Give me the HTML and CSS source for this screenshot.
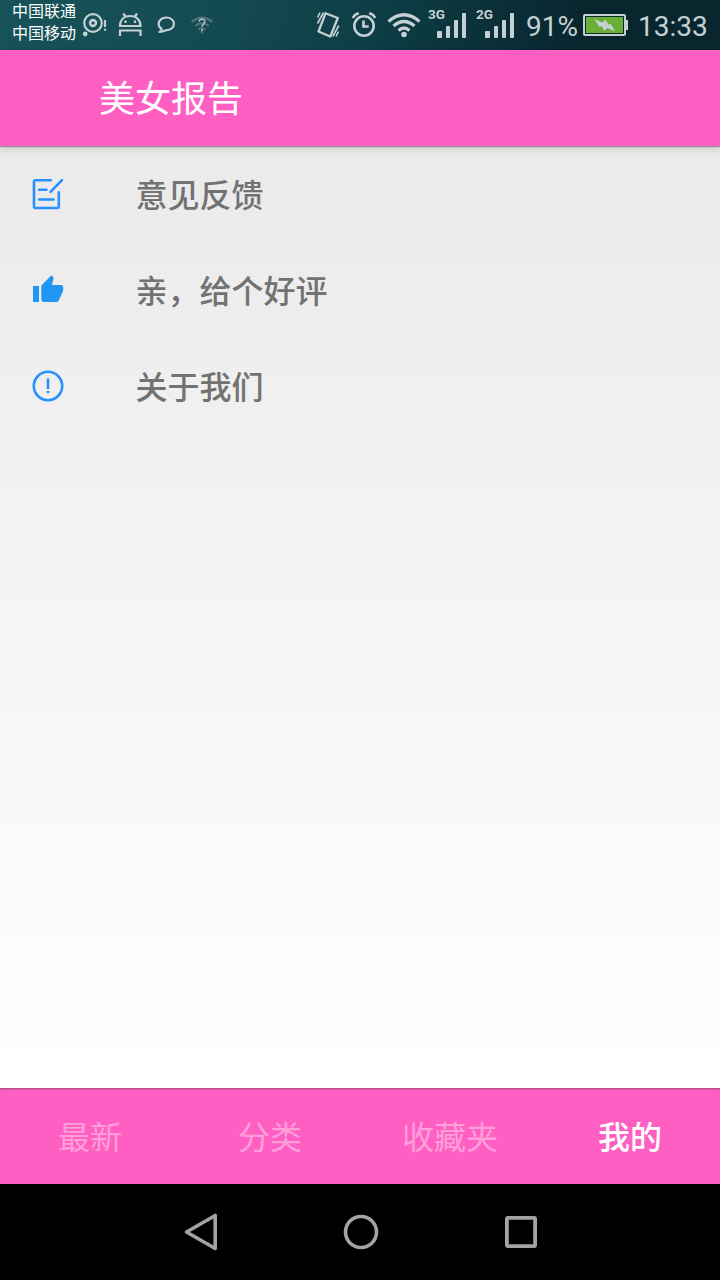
FILE: index.html
```
<!DOCTYPE html>
<html lang="zh-CN">
<head>
    <meta charset="UTF-8">
    <meta name="viewport" content="width=device-width, initial-scale=1.0">
    <title>美女报告</title>
    <link rel="stylesheet" href="styles.css">
</head>
<body>

<div class="status-bar">
    <div class="carriers">
        <span>中国联通</span>
        <span>中国移动</span>
    </div>
    <svg width="36" height="50" viewBox="76 0 36 50" fill="none" stroke="#c5d0d3" stroke-width="2.200">
        <circle cx="93" cy="23" r="8.800"/>
        <circle cx="93" cy="23" r="2.900" stroke-width="2.600"/>
        <circle cx="85.200" cy="34" r="2.400" fill="#c5d0d3" stroke="none"/>
        <path d="M105 20v7M105 28.700v2"/>
    </svg>
    <svg width="36" height="50" viewBox="112 0 36 50" fill="none" stroke="#c5d0d3" stroke-width="2.200">
        <path d="M120 26h20.500c0-6-4-10-10.300-10s-10.200 4-10.200 10zM123.300 13.500l2.500 3.500M137 13.500l-2.500 3.500M120 36v-5.500h20.500v5.500"/>
        <path d="M125.500 20.500v2.500M135 20.500v2.500"/>
    </svg>
    <svg width="36" height="50" viewBox="148 0 36 50" fill="none" stroke="#c5d0d3" stroke-width="2.200" stroke-linejoin="round">
        <path d="M159.500 32c1.600-.900 2.200-2 2-3.300-1.900-1.100-2.900-2.800-2.900-4.700 0-3.900 3.400-6.500 7.700-6.500s7.600 2.600 7.600 6.100c0 4.700-4 6.700-8.200 6.700-2 1-4 1.600-6.200 1.700z"/>
    </svg>
    <svg width="36" height="50" viewBox="184 0 36 50" fill="none" stroke="#4e7378" stroke-width="2.200">
        <path d="M191.500 22q10.500-8.500 21 0M195 26q7-5.500 14 0M198.500 29.500q3.500-2.500 7 0"/>
        <circle cx="202" cy="32" r="1.500" fill="#4e7378" stroke="none"/>
        <path d="M199.200 21.500c.300-3 5.800-2.800 5.600.300-.100 2.300-2.800 2.300-2.800 5.300M202 29v2" stroke="#b5c5c8" stroke-width="1.500"/>
    </svg>
    <div class="status-right">
        <svg width="35" height="50" viewBox="310 0 35 50" fill="none" stroke="#c5d0d3" stroke-width="2.300">
            <path d="M325.500 13.300l12.300 4.700-7.500 18.500-11.800-5z" stroke-linejoin="round"/>
            <path d="M323.500 12.500l-6 11M320 12.500l-2.500 5M332.800 36.500l6-11M336 36.500l2.500-5" stroke-width="1.600"/>
        </svg>
        <svg width="38" height="50" viewBox="345 0 38 50" fill="none" stroke="#c5d0d3" stroke-width="2.600">
            <circle cx="364" cy="26" r="9.700"/>
            <path d="M363.500 20.500v6h5.200M352.800 18q2-4 6-4.800M375.200 18q-2-4-6-4.800"/>
        </svg>
        <svg width="41" height="50" viewBox="383 0 41 50" fill="none" stroke="#c5d0d3" stroke-width="3.200">
            <path d="M388.500 21.500q15.500-13.500 31 0M393.500 26q10.500-9 21 0M398.500 30.500q5.500-5 11 0"/>
            <circle cx="404" cy="34.500" r="2.800" fill="#c5d0d3" stroke="none"/>
        </svg>
        <div class="signal">
            <span class="network">3G</span>
            <i class="bar1"></i><i class="bar2"></i><i class="bar3"></i><i class="bar4"></i>
        </div>
        <div class="signal">
            <span class="network">2G</span>
            <i class="bar1"></i><i class="bar2"></i><i class="bar3"></i><i class="bar4"></i>
        </div>
        <span class="percent">91%</span>
        <svg width="46" height="50" viewBox="583 0 46 50">
            <rect x="584" y="15" width="41" height="20" rx="1" fill="#0a2a33" stroke="#c5d0d3" stroke-width="2"/>
            <path d="M626 20h2v10h-2z" fill="#c5d0d3"/>
            <rect x="586" y="17" width="37" height="16" fill="#6aae35"/>
            <path d="M594 19l8.500 3.500 3-3 3 5.300 2-1.300 4.500 8-7.500-3.500-3.200 3-2.600-5-2.200 1z" fill="#c5d0d3"/>
        </svg>
        <span class="clock">13:33</span>
    </div>
</div>

<header class="toolbar">
    <h1>美女报告</h1>
</header>

<main class="content">
    <ul class="menu">
        <li>
            <svg width="32" height="32" viewBox="0 0 32 32" fill="none" stroke="#2990ff" stroke-width="2.600" stroke-linecap="round" stroke-linejoin="round">
                <path d="M18.800 2.300H3.500q-1.500 0-1.500 1.500v24.700q0 1.500 1.500 1.500H25.300q1.500 0 1.500-1.500V14.200M18.500 13.800L30 2.200M7.200 11.800h7.200M7.200 21.500H21.500"/>
            </svg>
            <span>意见反馈</span>
        </li>
        <li>
            <svg width="32" height="32" viewBox="0 0 32 32" fill="#2196f3">
                <path d="M1 12h6v16H1zM9.300 26V12.500q0-1 .8-1.800L19.500 1.200l1.500 1.500q.8.900.5 2L20 11h9q2.200 0 2.200 2.200v3q0 .6-.3 1.200l-4.200 9.100q-.7 1.500-2.200 1.500H12q-2.700 0-2.700-2z"/>
            </svg>
            <span>亲，给个好评</span>
        </li>
        <li>
            <svg width="32" height="32" viewBox="0 0 32 32" fill="none" stroke="#2990ff" stroke-width="2.600">
                <circle cx="16" cy="16" r="14.200"/>
                <path d="M16 8.500v10.500M16 21v2.200"/>
            </svg>
            <span>关于我们</span>
        </li>
    </ul>
</main>

<nav class="tabs">
    <a>最新</a>
    <a>分类</a>
    <a>收藏夹</a>
    <a class="active">我的</a>
</nav>

<div class="nav-bar">
    <svg width="160" height="96" viewBox="121 1184 160 96" fill="none" stroke="#a3a3a3" stroke-width="3.600" stroke-linejoin="round">
        <path d="M186.500 1232L215.200 1215.500v33z"/>
    </svg>
    <svg width="160" height="96" viewBox="281 1184 160 96" fill="none" stroke="#a3a3a3" stroke-width="3.600">
        <circle cx="361" cy="1232" r="15.500"/>
    </svg>
    <svg width="160" height="96" viewBox="441 1184 160 96" fill="none" stroke="#a3a3a3" stroke-width="3.800">
        <rect x="506.900" y="1217.900" width="28.200" height="28.200" rx="1"/>
    </svg>
</div>

</body>
</html>
```
FILE: styles.css
```
* { box-sizing: border-box; }
body { margin: 0; width: 720px; height: 1280px; display: flex; flex-direction: column; overflow: hidden; font-family: Roboto, "Noto Sans CJK SC", sans-serif; }
svg { display: block; flex: none; }

.status-bar { height: 50px; flex: none; display: flex; padding-left: 12px; color: #c5d0d3; background: linear-gradient(100deg, #185259 0%, #144b52 30%, #0d3b43 55%, #09262f 80%, #09262f 100%); }
.carriers { width: 64px; display: flex; flex-direction: column; padding-top: 1px; font-size: 16px; line-height: 22px; color: #fff; white-space: nowrap; }
.status-right { display: flex; margin-left: 90px; }
.signal { position: relative; width: 48px; height: 38px; display: flex; align-items: flex-end; gap: 4px; padding-left: 13px; }
.signal i { width: 4px; border-radius: 1px; background: #c5d0d3; }
.signal .bar1 { width: 5px; height: 7px; margin-right: -1px; }
.signal .bar2 { height: 12px; margin-left: 1px; }
.signal .bar3 { height: 18px; }
.signal .bar4 { height: 25px; }
.network { position: absolute; left: 4px; top: 6px; font-size: 13.5px; line-height: 16px; font-weight: 700; }
.percent { width: 63px; padding-left: 6px; font-size: 28px; line-height: 54px; }
.clock { padding-left: 9px; font-size: 28px; line-height: 54px; }

.toolbar { position: relative; height: 96px; flex: none; display: flex; align-items: center; padding: 4px 0 0 99px; background: #ff5fc2; box-shadow: 0 1px 1px rgba(0, 0, 0, 0.3), 0 3px 8px rgba(0, 0, 0, 0.15); }
h1 { margin: 0; font-size: 36px; line-height: 48px; font-weight: 400; color: #fff; }

.content { flex: 1; background: linear-gradient(#eaeaea, #ffffff); }
.menu { list-style: none; margin: 0; padding: 0; }
.menu li { height: 96px; display: flex; align-items: center; gap: 71.5px; padding-left: 32px; font-size: 32px; line-height: 48px; font-weight: 500; color: #727272; }
.menu span { padding-top: 3px; }

.tabs { height: 96px; flex: none; display: grid; grid-template-columns: repeat(4, 1fr); background: #ff5fc2; box-shadow: inset 0 1px 0 #b5508d, inset 0 2px 1px #d857a6; }
.tabs a { display: flex; align-items: center; justify-content: center; padding-bottom: 2px; font-size: 32px; color: #ff9fda; }
.tabs .active { font-weight: 500; color: #fff; }

.nav-bar { height: 96px; flex: none; display: flex; padding-left: 121px; background: #000; }
```
